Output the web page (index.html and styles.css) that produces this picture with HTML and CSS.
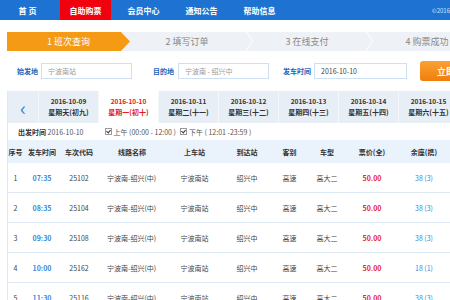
FILE: index.html
```html
<!DOCTYPE html>
<html lang="zh-CN">
<head>
    <meta charset="UTF-8">
    <title>自助购票</title>
    <link rel="stylesheet" href="styles.css">
</head>
<body>
    <div class="topnav">
        <a class="nav-item">首 页</a>
        <a class="nav-item active">自助购票</a>
        <a class="nav-item">会员中心</a>
        <a class="nav-item">通知公告</a>
        <a class="nav-item">帮助信息</a>
        <span class="copy">&copy;2016宁波</span>
    </div>

    <div class="page">
        <div class="steps">
            <div class="step current">1 班次查询</div>
            <div class="step">2 填写订单</div>
            <div class="step">3 在线支付</div>
            <div class="step">4 购票成功</div>
        </div>

        <div class="search">
            <label class="field-label l-from">始发地</label>
            <div class="field w-from">宁波南站</div>
            <label class="field-label l-to">目的地</label>
            <div class="field w-to">宁波南 - 绍兴中</div>
            <label class="field-label l-date">发车时间</label>
            <div class="field w-date dark">2016-10-10</div>
            <button class="btn-search">立即查询</button>
        </div>

        <div class="result">
            <div class="dates">
                <div class="date-prev">&lsaquo;</div>
                <div class="date-tab"><b>2016-10-09</b><span>星期天(初九)</span></div>
                <div class="date-tab selected"><b>2016-10-10</b><span>星期一(初十)</span></div>
                <div class="date-tab"><b>2016-10-11</b><span>星期二(十一)</span></div>
                <div class="date-tab"><b>2016-10-12</b><span>星期三(十二)</span></div>
                <div class="date-tab"><b>2016-10-13</b><span>星期四(十三)</span></div>
                <div class="date-tab"><b>2016-10-14</b><span>星期五(十四)</span></div>
                <div class="date-tab"><b>2016-10-15</b><span>星期六(十五)</span></div>
            </div>

            <div class="filter">
                <span class="filter-date"><b>出发时间</b> 2016-10-10</span>
                <label class="check"><span class="box"></span>上午 (00:00 - 12:00 )</label>
                <label class="check"><span class="box"></span>下午 ( 12:01 -23:59 )</label>
            </div>

            <table class="trips">
                <colgroup>
                    <col class="c-no"><col class="c-time"><col class="c-code"><col class="c-line"><col class="c-board">
                    <col class="c-arrive"><col class="c-kind"><col class="c-type"><col class="c-price"><col class="c-seat">
                </colgroup>
                <thead>
                    <tr>
                        <th>序号</th><th>发车时间</th><th>车次代码</th><th>线路名称</th><th>上车站</th>
                        <th>到达站</th><th>客别</th><th>车型</th><th>票价(全)</th><th>余座(携)</th>
                    </tr>
                </thead>
                <tbody>
                    <tr>
                        <td>1</td><td class="time">07:35</td><td>25102</td><td>宁波南-绍兴(中)</td><td>宁波南站</td>
                        <td>绍兴中</td><td>高速</td><td>高大二</td><td class="price">50.00</td><td class="seat">38 (3)</td>
                    </tr>
                    <tr>
                        <td>2</td><td class="time">08:35</td><td>25104</td><td>宁波南-绍兴(中)</td><td>宁波南站</td>
                        <td>绍兴中</td><td>高速</td><td>高大二</td><td class="price">50.00</td><td class="seat">38 (3)</td>
                    </tr>
                    <tr>
                        <td>3</td><td class="time">09:30</td><td>25108</td><td>宁波南-绍兴(中)</td><td>宁波南站</td>
                        <td>绍兴中</td><td>高速</td><td>高大二</td><td class="price">50.00</td><td class="seat">38 (3)</td>
                    </tr>
                    <tr>
                        <td>4</td><td class="time">10:00</td><td>25162</td><td>宁波南-绍兴(中)</td><td>宁波南站</td>
                        <td>绍兴中</td><td>高速</td><td>高大二</td><td class="price">50.00</td><td class="seat">18 (1)</td>
                    </tr>
                    <tr>
                        <td>5</td><td class="time">11:30</td><td>25116</td><td>宁波南-绍兴(中)</td><td>宁波南站</td>
                        <td>绍兴中</td><td>高速</td><td>高大二</td><td class="price">50.00</td><td class="seat">38 (3)</td>
                    </tr>
                </tbody>
            </table>
        </div>
    </div>
</body>
</html>
```

FILE: styles.css
```css
body {
    margin: 0;
    width: 450px;
    height: 300px;
    overflow: hidden;
    font-family: "Noto Sans CJK SC", "Liberation Sans", sans-serif;
    font-size: 8px;
    color: #333;
    background: #fff;
}
.topnav {
    display: flex;
    align-items: center;
    height: 20px;
    background: #1e73d2;
    white-space: nowrap;
}
.nav-item {
    display: flex;
    align-items: center;
    justify-content: center;
    width: 51px;
    height: 20px;
    margin-right: 7px;
    color: #fff;
    font-weight: bold;
    font-size: 8px;
}
.nav-item:first-child {
    margin-left: 2px;
}
.nav-item.active {
    background: #f1000e;
}
.copy {
    margin-left: auto;
    margin-right: -12px;
    color: #cfe2f8;
    font-size: 6px;
}
.page {
    width: 500px;
    padding-left: 7px;
}
.steps {
    display: flex;
    height: 19px;
    margin-top: 12px;
    background: #eef1f5;
    overflow: hidden;
}
.step {
    position: relative;
    flex: 0 0 120px;
    display: flex;
    align-items: center;
    justify-content: center;
    color: #888;
    font-size: 9px;
}
.step::after {
    content: "";
    position: absolute;
    right: -5px;
    top: 2px;
    width: 13px;
    height: 13px;
    border-top: 1px solid #fff;
    border-right: 1px solid #fff;
    transform: rotate(45deg) skew(8deg, 8deg);
}
.step.current {
    color: #fff;
    background: #f59a14;
    clip-path: polygon(0 0, 114px 0, 123px 50%, 114px 100%, 0 100%);
    flex-basis: 123px;
    margin-right: -3px;
}
.step.current::after {
    display: none;
}
.search {
    display: flex;
    align-items: center;
    height: 22px;
    margin-top: 9px;
}
.field-label {
    color: #1c64b8;
    font-weight: bold;
    font-size: 7px;
    white-space: nowrap;
}
.l-from { margin: 0 3px 0 10px; }
.l-to { margin: 0 4px 0 21px; }
.l-date { margin: 0 3px 0 14px; }
.field {
    height: 14px;
    line-height: 14px;
    padding: 0 6px;
    border: 1px solid #cfe0f3;
    color: #999;
    font-size: 7px;
    white-space: nowrap;
}
.field.dark {
    color: #444;
}
.w-from { width: 77px; }
.w-to { width: 77px; }
.w-date { width: 79px; }
.btn-search {
    flex: 0 0 64px;
    height: 20px;
    margin-left: 13px;
    border: none;
    border-radius: 3px;
    background: linear-gradient(#f9a234, #f17d0b);
    color: #fff;
    font-family: inherit;
    font-weight: bold;
    font-size: 9px;
    text-align: left;
    padding-left: 17px;
    white-space: nowrap;
}
.result {
    margin-top: 9px;
    border-left: 1px solid #dde8f3;
}
.dates {
    display: flex;
    height: 32px;
    background: #e8eef6;
}
.date-prev {
    flex: 0 0 30px;
    display: flex;
    align-items: center;
    justify-content: center;
    color: #3a86d6;
    font-size: 20px;
    border-right: 1px solid #f5f8fb;
}
.date-tab {
    flex: 0 0 59px;
    display: flex;
    flex-direction: column;
    align-items: center;
    justify-content: center;
    border-right: 1px solid #f5f8fb;
    font-size: 7px;
    line-height: 11px;
    color: #333;
}
.date-tab b {
    font-weight: bold;
    font-size: 6.5px;
}
.date-tab span {
    font-weight: bold;
}
.date-tab.selected {
    background: #fff;
    color: #e8161d;
}
.filter {
    display: flex;
    align-items: center;
    height: 17px;
    padding-left: 10px;
    font-size: 7px;
    color: #555;
}
.filter-date {
    margin-right: 21px;
}
.filter-date b {
    color: #333;
    font-weight: bold;
}
.check {
    display: flex;
    align-items: center;
    margin-right: 4px;
}
.box {
    position: relative;
    width: 5px;
    height: 5px;
    margin-right: 2px;
    border: 1px solid #999;
    background: #fff;
}
.box::after {
    content: "";
    position: absolute;
    left: 1px;
    top: 0;
    width: 2px;
    height: 3px;
    border-right: 1px solid #333;
    border-bottom: 1px solid #333;
    transform: rotate(40deg);
}
.trips {
    width: 443px;
    border-collapse: collapse;
    table-layout: fixed;
    font-size: 7px;
}
.trips th {
    height: 23px;
    background: #eaf2fb;
    color: #333;
    font-weight: bold;
    text-align: center;
    white-space: nowrap;
    padding: 0;
}
.trips td {
    height: 29px;
    border-bottom: 1px solid #dde9f5;
    text-align: center;
    white-space: nowrap;
    padding: 0;
    color: #444;
}
.trips td:nth-child(4) {
    text-align: left;
    padding-left: 10px;
}
.trips td.time {
    color: #3b8ad8;
    font-weight: bold;
}
.trips td.price {
    color: #e4262e;
    font-weight: bold;
}
.trips td.seat {
    color: #3b8ad8;
}
.c-no { width: 15px; }
.c-time { width: 38px; }
.c-code { width: 36px; }
.c-line { width: 70px; }
.c-board { width: 55px; }
.c-arrive { width: 50px; }
.c-kind { width: 35px; }
.c-type { width: 40px; }
.c-price { width: 50px; }
.c-seat { width: 54px; }
```
